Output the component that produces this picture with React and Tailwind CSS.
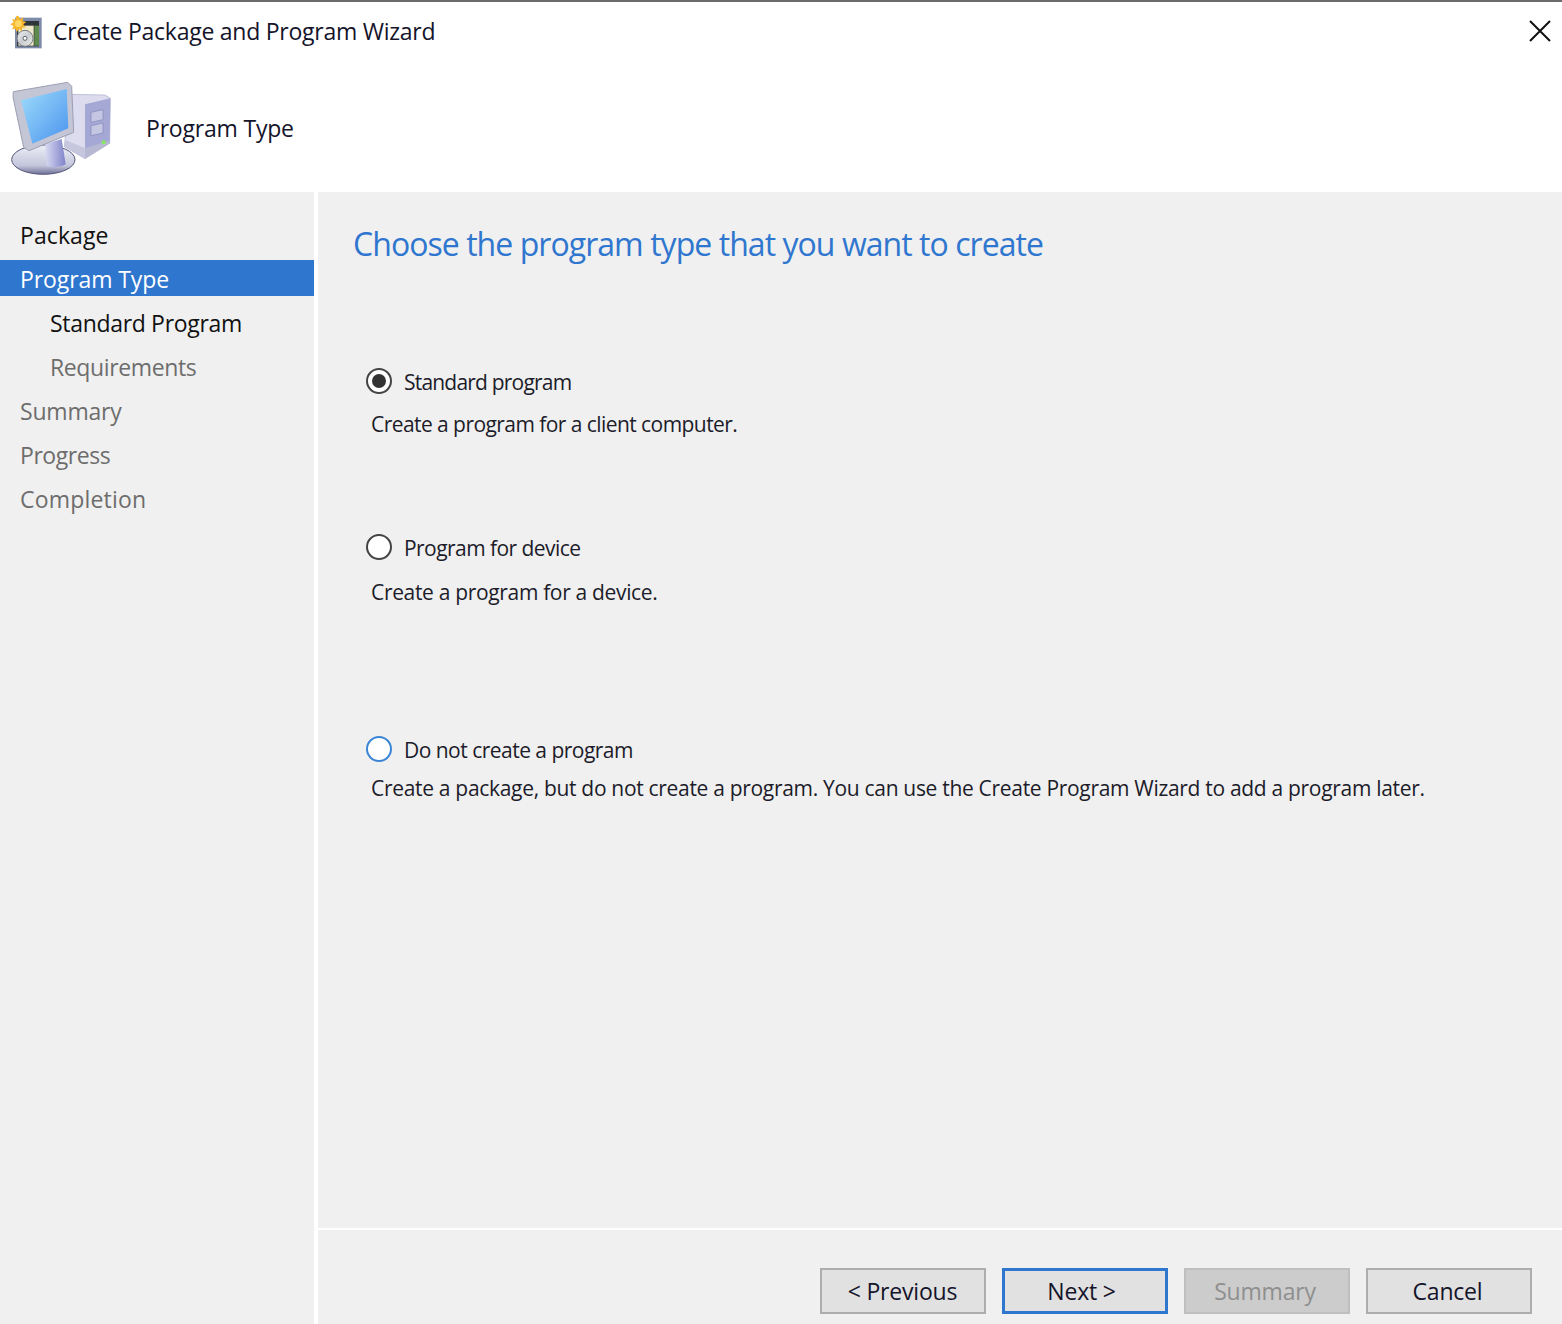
import React from "react";

const font = "font-['Open_Sans',_'Noto_Sans',_sans-serif]";

const WizardIcon = () => (
  <svg width="45" height="45" viewBox="0 0 135 135">
    <defs>
      <linearGradient id="cd" x1="0" y1="0" x2="1" y2="1">
        <stop offset="0" stopColor="#f4f4f0" />
        <stop offset="0.5" stopColor="#c9ccd2" />
        <stop offset="1" stopColor="#eef0e4" />
      </linearGradient>
    </defs>
    <rect x="30" y="26" width="80" height="92" fill="#7d8aa8" />
    <rect x="36" y="36" width="66" height="76" fill="#2f3438" />
    <rect x="88" y="50" width="14" height="60" fill="#5e8a4c" />
    <rect x="40" y="50" width="46" height="60" fill="#efe9c8" />
    <circle cx="60" cy="88" r="24" fill="url(#cd)" stroke="#767b84" strokeWidth="3" />
    <circle cx="60" cy="88" r="6" fill="#fff" stroke="#5d6066" strokeWidth="3" />
    <path d="M40 20l5 10 10-5-2 11 11 3-9 7 7 9-11 1 0 11-9-7-7 9-3-10-11 2 5-10-10-5 10-6-5-10 11 2 2-11z" fill="#f7b52c" />
    <circle cx="40" cy="44" r="10" fill="#ffd866" />
  </svg>
);

const ComputerIcon = () => (
  <svg className="mt-[4px]" width="115" height="110" viewBox="0 0 345 330">
    <defs>
      <linearGradient id="screen" x1="0" y1="0" x2="1" y2="1">
        <stop offset="0" stopColor="#9fdcfb" />
        <stop offset="1" stopColor="#4a94ee" />
      </linearGradient>
      <linearGradient id="stand" x1="0" y1="0" x2="1" y2="0">
        <stop offset="0" stopColor="#d9dbf2" />
        <stop offset="1" stopColor="#7f83c8" />
      </linearGradient>
      <linearGradient id="base" x1="0" y1="0" x2="0" y2="1">
        <stop offset="0" stopColor="#eceef6" />
        <stop offset="0.7" stopColor="#c4c6dc" />
        <stop offset="1" stopColor="#6f7096" />
      </linearGradient>
    </defs>
    <path d="M195 58L300 60l16 10-2 135-74 46-62-36z" fill="#dcdcee" stroke="#a9aac6" strokeWidth="2" />
    <path d="M240 88l76-18-2 135-74 22z" fill="#a5a8d4" />
    <path d="M258 112l36-8v30l-36 8zM258 152l36-8v30l-36 8z" fill="#c4c6e2" stroke="#8487b6" strokeWidth="2" />
    <path d="M180 195l60 24v32l-60-36z" fill="#c6c7de" />
    <path d="M240 219l74-22v8l-74 46z" fill="#b7b8d4" />
    <circle cx="296" cy="202" r="6" fill="#86e85a" />
    <ellipse cx="115" cy="254" rx="95" ry="44" fill="url(#base)" stroke="#55567c" strokeWidth="3" />
    <path d="M120 208l50-16 12 76c-16 10-40 10-56 4z" fill="url(#stand)" />
    <path d="M25 50L188 22l12 12 6 138-134 55-16-10L24 66z" fill="#c4c6d6" stroke="#9c9eb4" strokeWidth="3" />
    <path d="M48 76l137-34 5 118-108 46z" fill="url(#screen)" />
  </svg>
);

const Radio = ({ checked, focused }) => (
  <span
    className={`flex h-[26px] w-[26px] shrink-0 items-center justify-center rounded-full border-2 bg-white ${
      focused ? "border-[#3a85d6]" : "border-[#444444]"
    }`}
  >
    {checked && <span className="h-[14px] w-[14px] rounded-full bg-[#333333]" />}
  </span>
);

const Option = ({ label, text, checked, focused, className, gap, labelTrack, textTrack }) => (
  <div className={className}>
    <div className={`flex items-center gap-[12px] pl-[366px] text-[21px] leading-[30px] text-[#1c1c2a] ${labelTrack}`}>
      <Radio checked={checked} focused={focused} />
      <span className="pt-[2px]">{label}</span>
    </div>
    <p className={`${gap} ${textTrack} pl-[371px] text-[21px] leading-[30px] text-[#1c1c2a]`}>
      {text}
    </p>
  </div>
);

const steps = [
  { label: "Package", cls: "pl-[20px] tracking-[0.1px] text-[#111111]" },
  { label: "Program Type", cls: "pl-[20px] tracking-[-0.1px] bg-[#2f76cf] text-white" },
  { label: "Standard Program", cls: "pl-[50px] tracking-[-0.32px] text-[#111111]" },
  { label: "Requirements", cls: "pl-[50px] tracking-[-0.37px] text-[#6d6d6d]" },
  { label: "Summary", cls: "pl-[20px] tracking-[-0.2px] text-[#6d6d6d]" },
  { label: "Progress", cls: "pl-[20px] tracking-[-0.45px] text-[#6d6d6d]" },
  { label: "Completion", cls: "pl-[20px] tracking-[0.2px] text-[#6d6d6d]" },
];

const WizardButton = ({ children, className }) => (
  <button className={`h-[46px] w-[166px] text-[23px] leading-none tracking-[-0.2px] ${className}`}>{children}</button>
);

export default function App() {
  return (
    <div className={`flex h-[1324px] w-[1562px] flex-col overflow-hidden bg-white ${font}`}>
      <div className="h-[2px] bg-[#6b6b6b]" />
      <div className="flex h-[58px] items-center pl-[5px] pr-[9px]">
        <WizardIcon />
        <span className="ml-[3px] text-[23px] tracking-[-0.25px] text-[#14142a]">
          Create Package and Program Wizard
        </span>
        <svg className="ml-auto" width="26" height="26" viewBox="0 0 26 26">
          <path d="M3 3l20 20M23 3L3 23" stroke="#111" strokeWidth="2" fill="none" />
        </svg>
      </div>
      <div className="flex h-[132px] items-center pl-[5px] pt-[4px]">
        <ComputerIcon />
        <span className="ml-[26px] text-[23px] tracking-[-0.2px] text-[#14142a]">Program Type</span>
      </div>
      <div className="flex flex-1">
        <aside className="w-[314px] bg-[#f0f0f0] pt-[24px]">
          {steps.map((s) => (
            <div key={s.label} className={`mb-[8px] h-[36px] text-[23px] leading-[38px] ${s.cls}`}>
              {s.label}
            </div>
          ))}
        </aside>
        <div className="ml-[4px] flex flex-1 flex-col bg-[#f0f0f0]">
          <div className="flex-1 -ml-[318px]">
            <h1 className="pl-[353px] pt-[30px] text-[32px] leading-[44px] tracking-[-0.95px] text-[#2f76cf]">
              Choose the program type that you want to create
            </h1>
            <Option className="mt-[99px]" gap="mt-[12px]" labelTrack="tracking-[-0.8px]" textTrack="tracking-[-0.56px]" checked label="Standard program" text="Create a program for a client computer." />
            <Option className="mt-[92px]" gap="mt-[14px]" labelTrack="tracking-[-0.55px]" textTrack="tracking-[-0.33px]" label="Program for device" text="Create a program for a device." />
            <Option className="mt-[126px]" gap="mt-[8px]" labelTrack="tracking-[-0.52px]" textTrack="tracking-[-0.31px]" focused label="Do not create a program" text="Create a package, but do not create a program. You can use the Create Program Wizard to add a program later." />
          </div>
          <div className="h-[2px] bg-white" />
          <div className="flex h-[94px] justify-end gap-[16px] pr-[30px] pt-[38px]">
            <WizardButton className="border-2 border-[#adadad] bg-[#e1e1e1] pr-[1px] text-[#14142a]">&lt; Previous</WizardButton>
            <WizardButton className="border-[3px] border-[#2f76cf] bg-[#e1e1e1] pr-[7px] text-[#14142a]">Next &gt;</WizardButton>
            <WizardButton className="border-2 border-[#bfbfbf] bg-[#cccccc] pr-[4px] text-[#8f8f8f]">Summary</WizardButton>
            <WizardButton className="border-2 border-[#adadad] bg-[#e1e1e1] pr-[3px] text-[#14142a]">Cancel</WizardButton>
          </div>
        </div>
      </div>
    </div>
  );
}
